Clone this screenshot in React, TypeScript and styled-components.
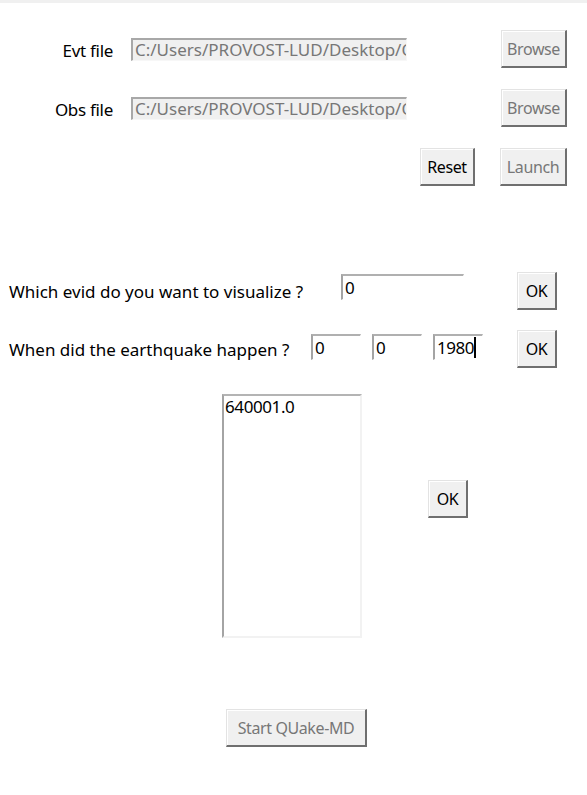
import React from 'react';
import styled, { createGlobalStyle } from 'styled-components';

const Global = createGlobalStyle`
  html, body { margin: 0; padding: 0; background: #ffffff; }
  body {
    font-family: "Noto Sans", "Open Sans", "DejaVu Sans", sans-serif;
    font-size: 17px;
    color: #000;
  }
  #root { width: 587px; }
`;

const Window = styled.div`
  width: 587px;
  height: 795px;
  box-sizing: border-box;
  background: #ffffff;
  border-top: 3px solid #f0f0f0;
  display: flex;
  flex-direction: column;
`;

const FileSection = styled.div`
  margin-top: 27px;
  display: flex;
  flex-direction: column;
  gap: 21px;
`;

const FileRow = styled.div<{ $end?: boolean }>`
  display: flex;
  align-items: center;
  height: 38px;
  padding-right: 20px;
  justify-content: ${p => (p.$end ? 'flex-end' : 'flex-start')};
  gap: ${p => (p.$end ? '25px' : '0')};
`;

const FieldLabel = styled.div`
  width: 113px;
  text-align: right;
  line-height: 22px;
  padding-top: 3px;
  white-space: nowrap;
  letter-spacing: -0.3px;
`;

const PathEntry = styled.div`
  margin-left: 18px;
  width: 276px;
  height: 23px;
  box-sizing: border-box;
  background: #f0f0f0;
  border-top: 2px solid #a8a8a8;
  border-left: 2px solid #a8a8a8;
  border-right: 1px solid #f7f7f7;
  border-bottom: 1px solid #f7f7f7;
  color: #777777;
  padding: 0 2px;
  line-height: 20px;
  overflow: hidden;
  white-space: nowrap;
`;

const Button = styled.div<{ $w: number; $disabled?: boolean }>`
  width: ${p => p.$w}px;
  height: 38px;
  box-sizing: border-box;
  flex: none;
  background: #f0f0f0;
  border-style: solid;
  border-width: 1px 2px 2px 1px;
  border-color: #e3e3e3 #6f6f6f #6f6f6f #e3e3e3;
  box-shadow: inset 1px 1px 0 #ffffff;
  color: ${p => (p.$disabled ? '#777777' : '#000')};
  display: flex;
  align-items: center;
  justify-content: center;
  white-space: nowrap;
  font-size: 16px;
  letter-spacing: -0.4px;
  padding-top: 1px;
`;

const BrowseSlot = styled.div`
  margin-left: auto;
`;

const QuestionSection = styled.div`
  margin-top: 86px;
  display: flex;
  flex-direction: column;
  gap: 21px;
`;

const QuestionRow = styled.div`
  display: flex;
  align-items: center;
  height: 37px;
  padding-left: 9px;
  padding-right: 30px;
`;

const QuestionLabel = styled.div<{ $w: number }>`
  width: ${p => p.$w}px;
  flex: none;
  white-space: nowrap;
  line-height: 22px;
  padding-top: 2px;
`;

const EntryGroup = styled.div<{ $gap: number }>`
  display: flex;
  gap: ${p => p.$gap}px;
  margin-top: ${p => (p.$gap ? -4 : -7)}px;
`;

const TextEntry = styled.div<{ $w: number }>`
  width: ${p => p.$w}px;
  height: 26px;
  box-sizing: border-box;
  background: #ffffff;
  border-top: 2px solid #b0b0b0;
  border-left: 2px solid #a4a4a4;
  border-right: 1px solid #ffffff;
  border-bottom: 1px solid #ffffff;
  padding: 1px 2px 0;
  line-height: 20px;
  white-space: nowrap;
  overflow: hidden;
  display: flex;
  align-items: center;
  letter-spacing: -0.5px;
`;

const Caret = styled.span`
  display: inline-block;
  flex: none;
  width: 2px;
  height: 21px;
  background: #000;
`;

const OkSlot = styled.div`
  margin-left: auto;
`;

const ListSection = styled.div`
  margin-top: 27px;
  display: flex;
  align-items: flex-start;
  padding-left: 222px;
`;

const ListBox = styled.div`
  width: 140px;
  height: 244px;
  box-sizing: border-box;
  background: #fff;
  border-top: 2px solid #b4b4b4;
  border-left: 2px solid #a4a4a4;
  border-right: 2px solid #f2f2f2;
  border-bottom: 2px solid #f2f2f2;
  padding: 0 1px;
  line-height: 22px;
  letter-spacing: -0.4px;
`;

const ListOkSlot = styled.div`
  margin-left: 66px;
  margin-top: 86px;
`;

const StartSection = styled.div`
  margin-top: 71px;
  padding-left: 226px;
  display: flex;
`;

export default function App() {
  return (
    <>
      <Global />
      <Window>
        <FileSection>
          <FileRow>
            <FieldLabel>Evt file</FieldLabel>
            <PathEntry>C:/Users/PROVOST-LUD/Desktop/Q</PathEntry>
            <BrowseSlot>
              <Button $w={66} $disabled>Browse</Button>
            </BrowseSlot>
          </FileRow>
          <FileRow>
            <FieldLabel>Obs file</FieldLabel>
            <PathEntry>C:/Users/PROVOST-LUD/Desktop/Q</PathEntry>
            <BrowseSlot>
              <Button $w={66} $disabled>Browse</Button>
            </BrowseSlot>
          </FileRow>
          <FileRow $end>
            <Button $w={55}>Reset</Button>
            <Button $w={67} $disabled>Launch</Button>
          </FileRow>
        </FileSection>

        <QuestionSection>
          <QuestionRow>
            <QuestionLabel $w={332}>Which evid do you want to visualize ?</QuestionLabel>
            <EntryGroup $gap={0}>
              <TextEntry $w={123}>0</TextEntry>
            </EntryGroup>
            <OkSlot>
              <Button $w={40}>OK</Button>
            </OkSlot>
          </QuestionRow>
          <QuestionRow>
            <QuestionLabel $w={302}>When did the earthquake happen ?</QuestionLabel>
            <EntryGroup $gap={11}>
              <TextEntry $w={50}>0</TextEntry>
              <TextEntry $w={50}>0</TextEntry>
              <TextEntry $w={50}>1980<Caret /></TextEntry>
            </EntryGroup>
            <OkSlot>
              <Button $w={40}>OK</Button>
            </OkSlot>
          </QuestionRow>
        </QuestionSection>

        <ListSection>
          <ListBox>640001.0</ListBox>
          <ListOkSlot>
            <Button $w={40}>OK</Button>
          </ListOkSlot>
        </ListSection>

        <StartSection>
          <Button $w={141} $disabled>Start QUake-MD</Button>
        </StartSection>
      </Window>
    </>
  );
}
